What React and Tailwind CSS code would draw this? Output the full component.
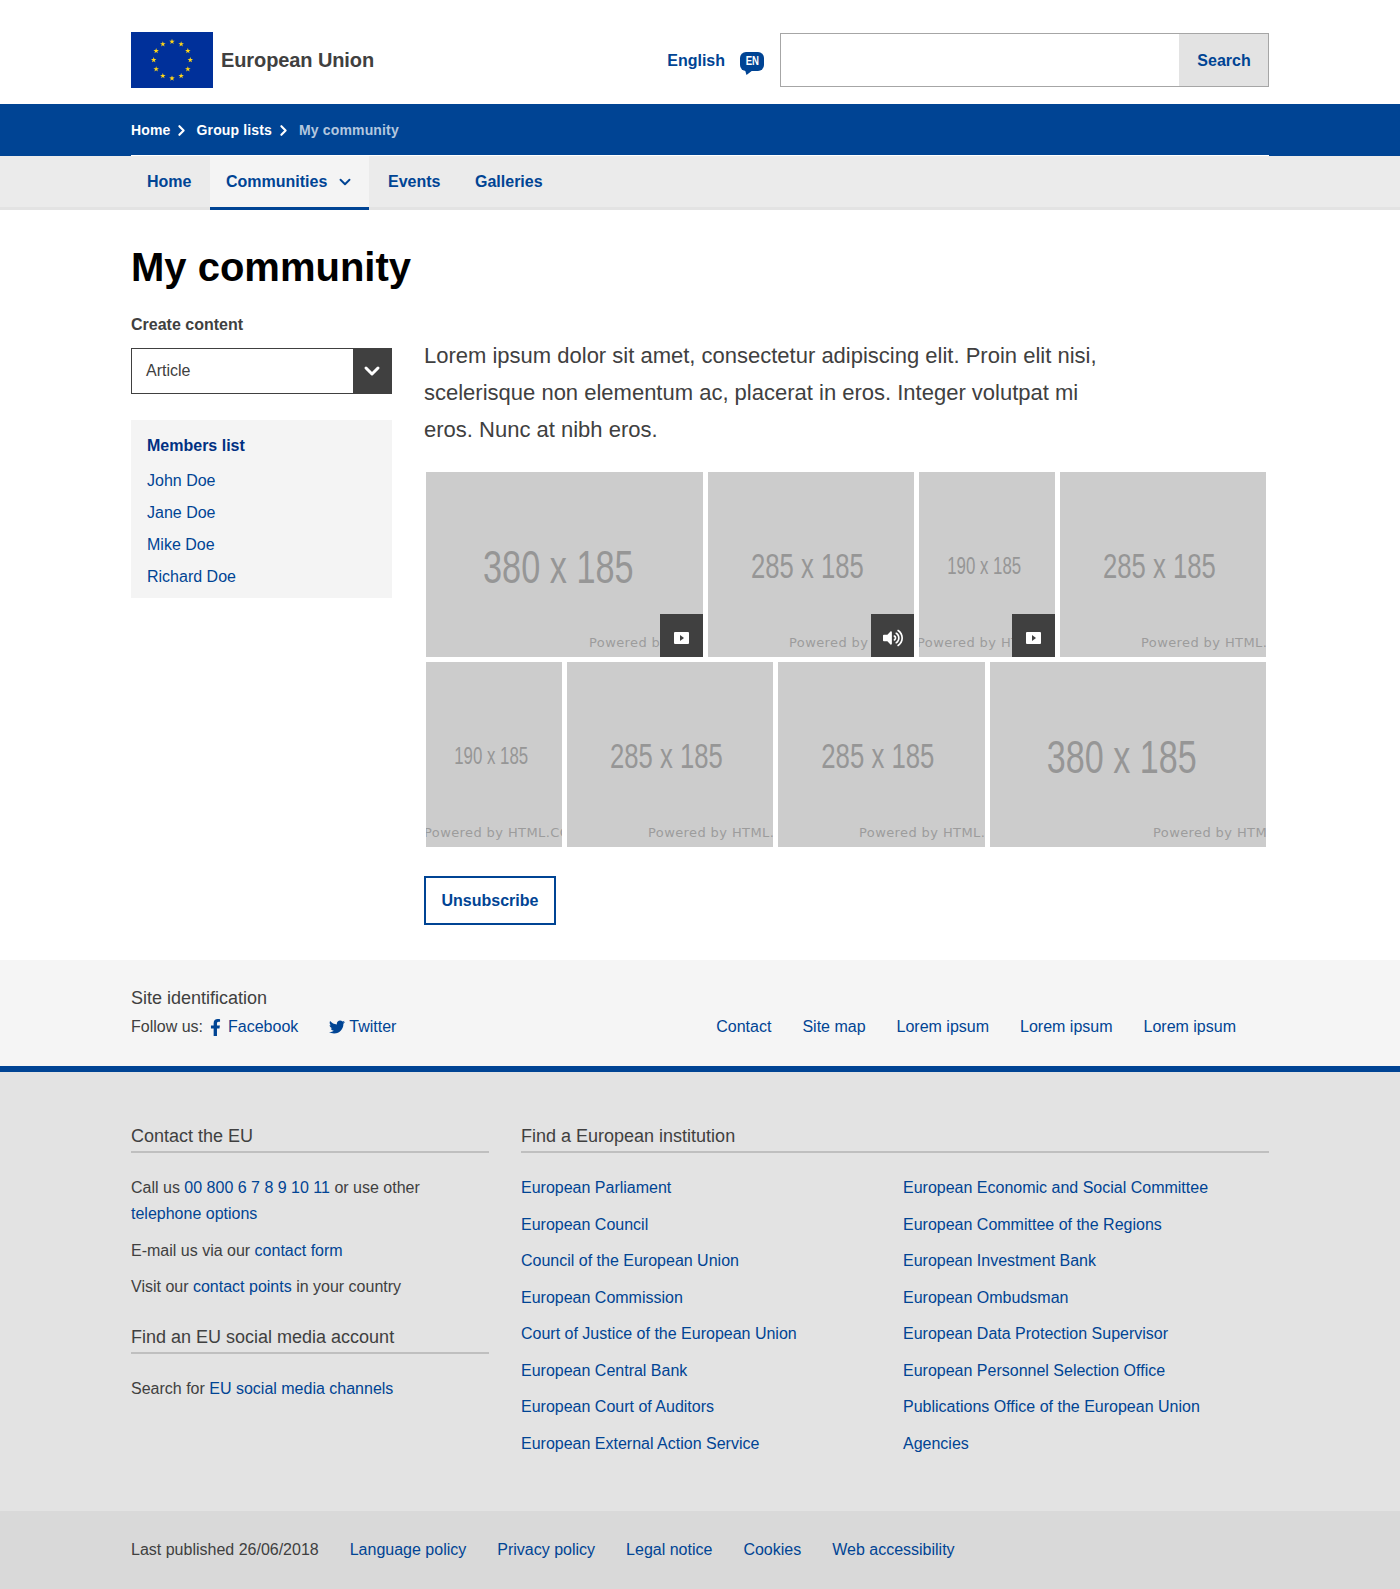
import { ChevronDown, ChevronRight } from 'lucide-react'
import { FaFacebookF, FaTwitter, FaVolumeUp } from 'react-icons/fa'

const Blue = ({ children }) => <a className="text-[#004494]">{children}</a>

const starAngles = [0, 30, 60, 90, 120, 150, 180, 210, 240, 270, 300, 330]

const Flag = () => (
  <svg viewBox="0 0 82 56" className="w-[82px] h-[56px] block">
    <rect width="82" height="56" fill="#00309a" />
    {starAngles.map((a) => {
      const cx = 41 + 18.3 * Math.sin((a * Math.PI) / 180)
      const cy = 28 - 18.3 * Math.cos((a * Math.PI) / 180)
      const pts = []
      for (let i = 0; i < 10; i++) {
        const r = i % 2 === 0 ? 2.9 : 1.15
        const t = (i * 36 * Math.PI) / 180
        pts.push(`${cx + r * Math.sin(t)},${cy - r * Math.cos(t)}`)
      }
      return <polygon key={a} points={pts.join(' ')} fill="#ffd617" />
    })}
  </svg>
)

const VideoBadge = () => (
  <div className="absolute right-0 bottom-0 w-[43px] h-[43px] bg-[#404040] flex items-center justify-center pt-[5px]">
    <div className="w-[15px] h-[12px] bg-white rounded-[1px] flex items-center justify-center">
      <div className="w-0 h-0 border-y-[3px] border-y-transparent border-l-[4px] border-l-[#404040]" />
    </div>
  </div>
)

const AudioBadge = () => (
  <div className="absolute right-0 bottom-0 w-[43px] h-[43px] bg-[#404040] flex items-center justify-center text-white pt-[5px]">
    <FaVolumeUp size={20} />
  </div>
)

// placeholder pictures are 380/285/190 wide natively and squeezed into their slot
const Pic = ({ outer, inner, label, labelClass, poweredClass, badge }) => (
  <div className={`relative h-[185px] overflow-hidden bg-[#cccccc] shrink-0 ${outer}`}>
    <div className={`relative h-[185px] origin-left ${inner}`}>
      <div className={`absolute inset-x-0 top-[5px] bottom-0 flex items-center justify-center text-[#969696] ${labelClass}`}>{label}</div>
    </div>
    <div className={`absolute top-[161px] whitespace-nowrap text-[13px] tracking-[0.4px] leading-[20px] text-[#9c9c9c] font-['DejaVu_Sans',sans-serif] ${poweredClass}`}>Powered by HTML.COM</div>
    {badge}
  </div>
)

const big = { labelClass: 'pr-[17px] text-[47px]', label: '380 x 185', poweredClass: 'left-[163px]' }
const mid = { labelClass: 'pr-[10px] text-[35.5px]', label: '285 x 185', poweredClass: 'left-[81px]' }
const small = { labelClass: 'pr-[8px] text-[23.5px]', label: '190 x 185', poweredClass: 'left-[-2px]' }

const institutionsA = [
  'European Parliament', 'European Council', 'Council of the European Union', 'European Commission',
  'Court of Justice of the European Union', 'European Central Bank', 'European Court of Auditors', 'European External Action Service',
]
const institutionsB = [
  'European Economic and Social Committee', 'European Committee of the Regions', 'European Investment Bank', 'European Ombudsman',
  'European Data Protection Supervisor', 'European Personnel Selection Office', 'Publications Office of the European Union', 'Agencies',
]

const FooterHeading = ({ children }) => (
  <h3 className="text-[18px] leading-[24px] text-[#404040] border-b-2 border-[#bfbfbf] pb-[3px]">{children}</h3>
)

const App = () => {
  return (
    <div className="font-['Liberation_Sans',Arial,sans-serif] text-[16px] text-[#404040] bg-white">
      {/* Header */}
      <header className="h-[104px] px-[131px] flex items-start justify-between">
        <div className="flex items-center gap-[8px] pt-[32px]">
          <Flag />
          <span className="text-[20px] font-bold leading-[56px] tracking-[-0.1px]">European Union</span>
        </div>
        <div className="flex items-center pt-[33px]">
          <span className="font-bold text-[#004494] pt-[1px]">English</span>
          <div className="relative ml-[15px] mr-[16px] mt-[2px] w-[24px] h-[19px] bg-[#004494] rounded-[6px] flex items-center justify-center text-white text-[12px] font-bold">
            <span className="scale-x-[0.8]">EN</span>
            <svg viewBox="0 0 8 5" className="absolute left-[5px] top-[18px] w-[8px] h-[5px]"><path d="M0 0h8L1.500 5z" fill="#004494" /></svg>
          </div>
          <div className="w-[489px] h-[54px] border border-[#a6a6a6] flex justify-end">
            <div className="w-[89px] bg-[#e3e3e3] flex items-center justify-center font-bold text-[#004494] pt-[1px] pl-[1px]">Search</div>
          </div>
        </div>
      </header>

      {/* Breadcrumb */}
      <div className="h-[52px] bg-[#004494] px-[131px]">
        <div className="h-[52px] border-b-[1px] border-white flex items-center text-[14px] font-bold text-white pt-[1px] tracking-[0.15px]">
          <span>Home</span>
          <ChevronRight size={17} strokeWidth={3} className="ml-[2px] mr-[4px]" />
          <span className="ml-[3px]">Group lists</span>
          <ChevronRight size={17} strokeWidth={3} className="ml-[3px] mr-[4px]" />
          <span className="ml-[3px] text-[#b3c7df]">My community</span>
        </div>
      </div>

      {/* Nav */}
      <nav className="h-[54px] bg-[#ebebeb] border-b-[3px] border-[#e3e3e3] px-[131px] flex font-bold text-[#004494]">
        <div className="w-[79px] h-[51px] flex items-center pl-[16px]">Home</div>
        <div className="w-[159px] h-[54px] bg-[#f4f4f4] border-b-[3px] border-[#004494] flex items-center pl-[16px] gap-[9px]">
          Communities
          <ChevronDown size={18} strokeWidth={2.5} />
        </div>
        <div className="w-[106px] h-[51px] flex items-center pl-[19px]">Events</div>
        <div className="h-[51px] flex items-center">Galleries</div>
      </nav>

      {/* Main */}
      <main className="px-[131px] h-[750px]">
        <h1 className="pt-[31px] text-[40px] leading-[52px] font-bold text-black">My community</h1>
        <div className="flex mt-[20px]">
          <aside className="w-[261px] shrink-0">
            <div className="font-bold leading-[24px]">Create content</div>
            <div className="mt-[11px] h-[46px] border border-[#404040] flex items-center justify-between pl-[14px]">
              Article
              <div className="w-[39px] h-[46px] -mr-px bg-[#404040] flex items-center justify-center text-white pr-[1px]">
                <ChevronDown size={24} strokeWidth={3} />
              </div>
            </div>
            <div className="mt-[26px] h-[178px] bg-[#f4f4f4] px-[16px] pt-[14px]">
              <div className="font-bold text-[#003082] leading-[24px] mb-[7px]">Members list</div>
              {['John Doe', 'Jane Doe', 'Mike Doe', 'Richard Doe'].map((n) => (
                <div key={n} className="h-[32px] leading-[32px] text-[#004494]">{n}</div>
              ))}
            </div>
          </aside>
          <section className="ml-[32px] flex-1 pt-[24px]">
            <p className="w-[690px] text-[22px] leading-[37px]">
              Lorem ipsum dolor sit amet, consectetur adipiscing elit. Proin elit nisi, scelerisque non elementum ac, placerat in eros. Integer volutpat mi eros. Nunc at nibh eros.
            </p>
            <div className="mt-[24px] ml-[2px] flex gap-[5px]">
              <Pic outer="w-[277px]" inner="w-[380px] scale-x-[0.729]" {...big} badge={<VideoBadge />} />
              <Pic outer="w-[206px]" inner="w-[285px] scale-x-[0.723]" {...mid} badge={<AudioBadge />} />
              <Pic outer="w-[136px]" inner="w-[190px] scale-x-[0.716]" {...small} badge={<VideoBadge />} />
              <Pic outer="w-[206px]" inner="w-[285px] scale-x-[0.723]" {...mid} />
            </div>
            <div className="mt-[5px] ml-[2px] flex gap-[5px]">
              <Pic outer="w-[136px]" inner="w-[190px] scale-x-[0.716]" {...small} />
              <Pic outer="w-[206px]" inner="w-[285px] scale-x-[0.723]" {...mid} />
              <Pic outer="w-[207px]" inner="w-[285px] scale-x-[0.726]" {...mid} />
              <Pic outer="w-[276px]" inner="w-[380px] scale-x-[0.726]" {...big} />
            </div>
            <button className="mt-[29px] w-[132px] h-[49px] border-2 border-[#004494] font-bold text-[#004494]">Unsubscribe</button>
          </section>
        </div>
      </main>

      {/* Site identification */}
      <div className="h-[112px] bg-[#f5f5f5] border-b-[6px] border-[#004494] px-[131px] pt-[25px]">
        <div className="text-[18px] leading-[26px]">Site identification</div>
        <div className="mt-[4px] flex items-center leading-[24px]">
          <span>Follow us:</span>
          <FaFacebookF size={17} className="ml-[4px] text-[#004494]" />
          <span className="ml-[4px] text-[#004494]">Facebook</span>
          <FaTwitter size={16} className="ml-[31px] text-[#004494]" />
          <span className="ml-[4px] text-[#004494]">Twitter</span>
          <div className="ml-auto mr-[33px] flex gap-[31px] text-[#004494]">
            <span>Contact</span><span>Site map</span><span>Lorem ipsum</span><span>Lorem ipsum</span><span>Lorem ipsum</span>
          </div>
        </div>
      </div>

      {/* Institutions footer */}
      <div className="h-[439px] bg-[#e3e3e3] px-[131px] pt-[52px] flex gap-[32px]">
        <div className="w-[358px] shrink-0">
          <FooterHeading>Contact the EU</FooterHeading>
          <div className="mt-[22px] leading-[26px]">
            <p>Call us <Blue>00 800 6 7 8 9 10 11</Blue> or use other <Blue>telephone options</Blue></p>
            <p className="mt-[11px]">E-mail us via our <Blue>contact form</Blue></p>
            <p className="mt-[10px]">Visit our <Blue>contact points</Blue> in your country</p>
          </div>
          <div className="mt-[25px]"><FooterHeading>Find an EU social media account</FooterHeading></div>
          <p className="mt-[22px] leading-[26px]">Search for <Blue>EU social media channels</Blue></p>
        </div>
        <div className="flex-1">
          <FooterHeading>Find a European institution</FooterHeading>
          <div className="mt-[17px] grid grid-cols-[382px_1fr]">
            <div>{institutionsA.map((t) => <div key={t} className="h-[36.5px] leading-[36.5px] text-[#004494]">{t}</div>)}</div>
            <div>{institutionsB.map((t) => <div key={t} className="h-[36.5px] leading-[36.5px] text-[#004494]">{t}</div>)}</div>
          </div>
        </div>
      </div>

      {/* Bottom bar */}
      <div className="h-[78px] bg-[#d9d9d9] px-[131px] flex items-center gap-[31px]">
        <span>Last published 26/06/2018</span>
        <Blue>Language policy</Blue>
        <Blue>Privacy policy</Blue>
        <Blue>Legal notice</Blue>
        <Blue>Cookies</Blue>
        <Blue>Web accessibility</Blue>
      </div>
    </div>
  )
}

export default App
